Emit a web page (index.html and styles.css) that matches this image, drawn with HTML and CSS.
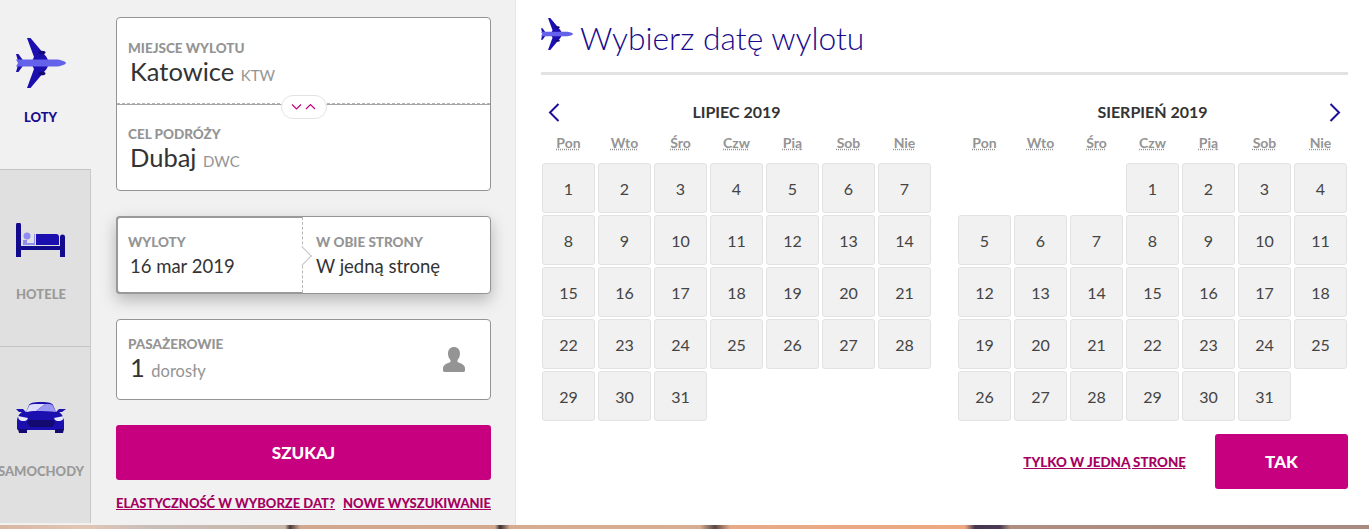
FILE: index.html
```html
<!DOCTYPE html>
<html lang="pl">
<head>
    <meta charset="UTF-8">
    <title>Wybierz datę wylotu</title>
    <link rel="stylesheet" href="styles.css">
</head>
<body>
    <svg class="defs" width="0" height="0">
        <symbol id="plane" viewBox="0 0 50 50">
            <path fill="#1c0fb0" d="M11 0h3.500l16 19 3 6-3 6-16 19H11l7-19-3-6 3-6z"/>
            <path fill="#1c0fb0" d="M0 16l2.500 0 5 7H2zM0 34l2.500 0 5-7H2z"/>
            <ellipse fill="#120a70" cx="26" cy="14.500" rx="3.500" ry="1.800"/>
            <ellipse fill="#120a70" cx="26" cy="35.500" rx="3.500" ry="1.800"/>
            <path fill="#6462ea" d="M0 21.500h40c4 0 10 2 10 3.500s-6 3.500-10 3.500H0l2-3.500z"/>
        </symbol>
    </svg>

    <div class="booking">
        <nav class="tabs">
            <a class="tab active">
                <svg class="tab-icon plane-icon"><use href="#plane"/></svg>
                <span>LOTY</span>
            </a>
            <a class="tab">
                <svg class="tab-icon bed-icon" viewBox="0 0 50 34">
                    <path fill="#120a8c" d="M0 2a2.500 2.500 0 0 1 5 0v21h39V14a2.500 2.500 0 0 1 5 0v20h-5v-7H5v7H0z"/>
                    <path fill="#1c0fb0" d="M20 11h20a3 3 0 0 1 3 3v8H20z"/>
                    <circle fill="#8f8cf2" cx="11" cy="13" r="3.500"/>
                    <path fill="#8f8cf2" d="M7 17h4v3h7v-9h1v11H7z"/>
                </svg>
                <span>HOTELE</span>
            </a>
            <a class="tab">
                <svg class="tab-icon car-icon" viewBox="0 0 50 31">
                    <path fill="#1c0fb0" d="M0 7h7l3 3 3-7c1-2 4-3 12-3s11 1 12 3l3 7 3-3h7l-4 3h-3c3 2 5 5 5 10v7c0 1-1 1-2 1H4c-1 0-3 0-3-1v-7c0-5 2-8 5-10H3z"/>
                    <path fill="#dcdcff" d="M10 10l3-6c1-2 4-2 12-2h4l-9 7c-4 0-7 .5-10 1z"/>
                    <path fill="#9a97f0" d="M29 2h1c4 0 6 0 7 2l3 6c-6-1-12-1-20-1z"/>
                    <path fill="#120a70" d="M12 18h26l1 3-3 4H14l-3-4zM2 27h9v4H3zM39 27h9l-1 4h-8z"/>
                    <path fill="#e8e8ff" d="M2 14l10 2-1 2c-1 1-3 1-4 1-3 0-5-2-5-5zM48 14l-10 2 1 2c1 1 3 1 4 1 3 0 5-2 5-5z"/>
                </svg>
                <span>SAMOCHODY</span>
            </a>
        </nav>

        <form class="search">
            <div class="card route">
                <div class="route-row route-row-from">
                    <label>MIEJSCE WYLOTU</label>
                    <p class="value">Katowice <small>KTW</small></p>
                </div>
                <div class="route-row route-row-to">
                    <label>CEL PODRÓŻY</label>
                    <p class="value">Dubaj <small>DWC</small></p>
                </div>
                <div class="swap">
                    <svg width="26" height="8" viewBox="0 0 26 8" fill="none" stroke="#c6007e" stroke-width="1.200">
                        <path d="M1 1.500l4.500 4.500L10 1.500M15 6l4.500-4.500L24 6"/>
                    </svg>
                </div>
            </div>

            <div class="card dates">
                <div class="date-cell date-from">
                    <label>WYLOTY</label>
                    <p class="date-value">16 mar 2019</p>
                    <span class="notch"></span>
                </div>
                <div class="date-cell date-to">
                    <label>W OBIE STRONY</label>
                    <p class="date-value">W jedną stronę</p>
                </div>
            </div>

            <div class="card passengers">
                <div class="pax-info">
                    <label>PASAŻEROWIE</label>
                    <p class="value">1 <small>dorosły</small></p>
                </div>
                <svg class="person" width="22" height="25" viewBox="0 0 22 25">
                    <path fill="#949494" d="M11 0c3.500 0 6 2.500 6 6.500 0 2.500-1 5-2.500 6.500v2c3 1 7.500 3 7.500 6v2.500c0 1-1 1.500-2 1.500H2c-1 0-2-.5-2-1.500V21c0-3 4.500-5 7.500-6v-2C6 11.500 5 9 5 6.500 5 2.500 7.500 0 11 0z"/>
                </svg>
            </div>

            <button class="btn btn-search" type="button">SZUKAJ</button>

            <div class="search-links">
                <a>ELASTYCZNOŚĆ W WYBORZE DAT?</a>
                <a>NOWE WYSZUKIWANIE</a>
            </div>
        </form>

        <main class="picker">
            <h1 class="picker-title">
                <svg class="title-plane" width="32" height="32"><use href="#plane"/></svg>
                Wybierz datę wylotu
            </h1>

            <div class="months">
                <section class="month">
                    <header class="month-head">
                        <svg class="arrow arrow-prev" width="12" height="19" viewBox="0 0 12 19" fill="none" stroke="#1c0f9c" stroke-width="2"><path d="M10.500 1L2 9.500l8.500 8.500"/></svg>
                        LIPIEC 2019
                    </header>
                    <div class="days">
                        <abbr title="Poniedziałek">Pon</abbr><abbr title="Wtorek">Wto</abbr><abbr title="Środa">Śro</abbr><abbr title="Czwartek">Czw</abbr><abbr title="Piątek">Pią</abbr><abbr title="Sobota">Sob</abbr><abbr title="Niedziela">Nie</abbr>
                        <a>1</a><a>2</a><a>3</a><a>4</a><a>5</a><a>6</a><a>7</a>
                        <a>8</a><a>9</a><a>10</a><a>11</a><a>12</a><a>13</a><a>14</a>
                        <a>15</a><a>16</a><a>17</a><a>18</a><a>19</a><a>20</a><a>21</a>
                        <a>22</a><a>23</a><a>24</a><a>25</a><a>26</a><a>27</a><a>28</a>
                        <a>29</a><a>30</a><a>31</a>
                    </div>
                </section>

                <section class="month">
                    <header class="month-head">
                        SIERPIEŃ 2019
                        <svg class="arrow arrow-next" width="12" height="19" viewBox="0 0 12 19" fill="none" stroke="#1c0f9c" stroke-width="2"><path d="M1.500 1L10 9.500 1.500 18"/></svg>
                    </header>
                    <div class="days">
                        <abbr title="Poniedziałek">Pon</abbr><abbr title="Wtorek">Wto</abbr><abbr title="Środa">Śro</abbr><abbr title="Czwartek">Czw</abbr><abbr title="Piątek">Pią</abbr><abbr title="Sobota">Sob</abbr><abbr title="Niedziela">Nie</abbr>
                        <i></i><i></i><i></i><a>1</a><a>2</a><a>3</a><a>4</a>
                        <a>5</a><a>6</a><a>7</a><a>8</a><a>9</a><a>10</a><a>11</a>
                        <a>12</a><a>13</a><a>14</a><a>15</a><a>16</a><a>17</a><a>18</a>
                        <a>19</a><a>20</a><a>21</a><a>22</a><a>23</a><a>24</a><a>25</a>
                        <a>26</a><a>27</a><a>28</a><a>29</a><a>30</a><a>31</a>
                    </div>
                </section>
            </div>

            <div class="picker-foot">
                <a class="link-oneway">TYLKO W JEDNĄ STRONĘ</a>
                <button class="btn btn-ok" type="button">TAK</button>
            </div>
        </main>
    </div>
</body>
</html>
```
FILE: styles.css
```css
html, body {
    margin: 0;
    padding: 0;
    height: 529px;
    overflow: hidden;
}

body {
    font-family: Lato, "Open Sans", sans-serif;
    color: #333;
    /* strip of the photo behind the widget */
    background: linear-gradient(90deg, #d8b6a2 0, #e2c6b4 85px, #c9bdb8 150px, #c9b7a8 285px, #4c3a38 290px, #d0a78e 300px, #d3a98e 495px, #3d2f33 500px, #d6ab90 510px, #d8ae92 700px, #5a4744 715px, #e6aa88 730px, #eda87f 965px, #453650 975px, #4a3a52 1000px, #b08d80 1010px, #a98a80 1369px);
}

.defs {
    display: block;
    height: 0;
}

.booking {
    display: flex;
    height: 525px;
    background-color: #fff;
}

/* left tabs */
.tabs {
    width: 91px;
    flex: none;
    display: flex;
    flex-direction: column;
    background-color: #f1f1f1;
}

.tab {
    flex: none;
    height: 177px;
    box-sizing: border-box;
    display: flex;
    flex-direction: column;
    align-items: center;
    padding-right: 8px;
    background-color: #e0e0e0;
    border-right: 1px solid #c9c9c9;
    border-top: 1px solid #c4c4c4;
    color: #999;
    font-size: 13px;
    font-weight: 900;
    white-space: nowrap;
}

.tab.active {
    height: 169px;
    background-color: #f1f1f1;
    border: 0;
    color: #170a8c;
    padding-top: 38px;
    padding-right: 10px;
}

.tab-icon {
    flex: none;
}

.plane-icon {
    width: 50px;
    height: 50px;
    margin-bottom: 21px;
}

.bed-icon {
    width: 50px;
    height: 34px;
    margin-top: 53px;
    margin-bottom: 29px;
}

.car-icon {
    width: 50px;
    height: 31px;
    margin-top: 55px;
    margin-bottom: 30px;
}

/* search form */
.search {
    width: 425px;
    flex: none;
    box-sizing: border-box;
    padding: 17px 24px 0 25px;
    background-color: #f1f1f1;
    border-right: 1px solid #e6e6e6;
}

.card {
    background-color: #fff;
    border: 1px solid #949494;
    border-radius: 4px;
    box-sizing: border-box;
}

.card label {
    display: block;
    font-size: 13.500px;
    font-weight: 900;
    line-height: 16px;
    color: #949494;
}

.value {
    margin: 0;
    padding-left: 2px;
    font-size: 25.500px;
    line-height: 30px;
    color: #333;
}

.value small {
    font-size: 15px;
    color: #949494;
}

.route {
    position: relative;
    height: 174px;
}

.route-row {
    height: 86px;
    box-sizing: border-box;
    padding: 22px 11px 0;
}

.route-row-from {
    border-bottom: 1px dashed #b5b5b5;
}

.route-row-to {
    padding-top: 21px;
    border-top: 1px solid #a5a5a5;
}

.swap {
    position: absolute;
    left: 164px;
    top: 77px;
    width: 46px;
    height: 24px;
    box-sizing: border-box;
    border: 1px solid #e3e3e3;
    border-radius: 12px;
    background-color: #fff;
    display: flex;
    align-items: center;
    justify-content: center;
}

.dates {
    display: flex;
    height: 78px;
    margin-top: 25px;
    box-shadow: 0 6px 16px rgba(0, 0, 0, 0.25);
}

.date-cell {
    position: relative;
    box-sizing: border-box;
    padding-top: 16px;
}

.date-from {
    width: 186px;
    padding-left: 10px;
    border: 2px solid #999;
    border-right: 0;
    margin: -1px 0 -1px -1px;
    border-radius: 4px 0 0 4px;
}

.date-to {
    flex: 1;
    padding-left: 13px;
    padding-top: 17px;
    border-left: 1px dashed #b5b5b5;
}

.notch {
    position: absolute;
    right: -7px;
    top: 31px;
    width: 14px;
    height: 14px;
    box-sizing: border-box;
    background-color: #fff;
    border-top: 1px solid #c4c4c4;
    border-right: 1px solid #c4c4c4;
    transform: rotate(45deg);
    z-index: 1;
}

.date-value {
    margin: 5px 0 0 2px;
    font-size: 18.500px;
    line-height: 22px;
    color: #333;
}

.date-to .date-value {
    margin-left: 0;
}

.passengers {
    display: flex;
    justify-content: space-between;
    align-items: center;
    height: 81px;
    margin-top: 25px;
    padding: 0 25px 0 11px;
}

.pax-info {
    padding-top: 3px;
}

.pax-info small {
    font-size: 16.500px;
}

.btn {
    border: 0;
    border-radius: 3px;
    background-color: #c6007e;
    color: #fff;
    font-family: inherit;
    font-size: 17px;
    font-weight: 900;
    cursor: pointer;
}

.btn-search {
    display: block;
    width: 100%;
    height: 55px;
    margin-top: 25px;
}

.search-links {
    display: flex;
    justify-content: space-between;
    margin-top: 15px;
    font-size: 13px;
    font-weight: 900;
    color: #a5005f;
    text-decoration: underline;
    white-space: nowrap;
}

/* date picker */
.picker {
    flex: 1;
    box-sizing: border-box;
    padding: 0 21px 0 25px;
    background-color: #fff;
}

.picker-title {
    display: flex;
    align-items: center;
    gap: 7px;
    height: 75px;
    margin: 0;
    box-sizing: border-box;
    padding-top: 4px;
    border-bottom: 3px solid #e2e2e2;
    font-size: 31.800px;
    font-weight: 300;
    color: #170a8c;
}

.title-plane {
    align-self: flex-start;
    margin-top: 14px;
}

.months {
    display: flex;
    gap: 27px;
    margin-left: 1px;
}

.month {
    width: 389px;
}

.month-head {
    position: relative;
    height: 46px;
    padding-top: 27px;
    box-sizing: border-box;
    text-align: center;
    font-size: 16px;
    font-weight: 700;
    color: #333;
}

.arrow {
    position: absolute;
    top: 28px;
}

.arrow-prev {
    left: 6px;
}

.arrow-next {
    right: 6px;
}

.days {
    display: grid;
    grid-template-columns: repeat(7, 53px);
    grid-template-rows: 40px;
    grid-auto-rows: 50px;
    gap: 2px 3px;
}

.days abbr {
    padding-top: 13px;
    text-align: center;
    font-size: 14px;
    font-weight: 700;
    color: #949494;
    text-decoration: underline dotted;
}

.days a {
    display: flex;
    align-items: center;
    justify-content: center;
    background-color: #f1f1f1;
    border: 1px solid #e2e2e2;
    border-radius: 3px;
    font-size: 16px;
    color: #444;
}

.picker-foot {
    display: flex;
    justify-content: flex-end;
    align-items: center;
    gap: 29px;
    margin-top: 13px;
}

.link-oneway {
    font-size: 13.400px;
    font-weight: 900;
    color: #a5005f;
    text-decoration: underline;
}

.btn-ok {
    width: 133px;
    height: 55px;
}
```
